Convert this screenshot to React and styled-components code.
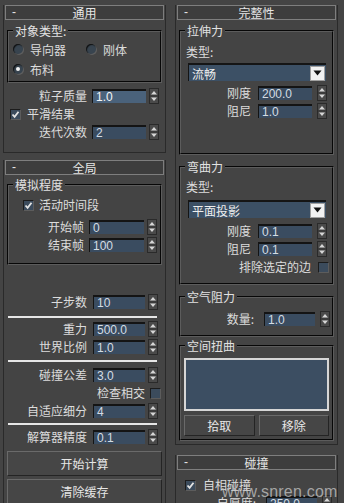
import React from "react";
import styled, { createGlobalStyle } from "styled-components";

const GlobalStyle = createGlobalStyle`
  html, body {
    margin: 0;
    padding: 0;
    background: #444444;
  }
  body {
    width: 344px;
    height: 503px;
    overflow: hidden;
    font-family: "Noto Sans CJK SC", "Noto Sans", sans-serif;
    font-size: 12px;
    color: #dcdcdc;
  }
`;

const Page = styled.div`
  position: relative;
  display: flex;
  align-items: flex-start;
  width: 344px;
  height: 503px;
  overflow: hidden;
  background: #444444;
`;

const Column = styled.div`
  width: 163px;
  margin-left: ${(p) => p.$ml}px;
  padding-top: 5px;
  display: flex;
  flex-direction: column;
`;

const Rollout = styled.section`
  margin-top: ${(p) => p.$mt || 0}px;
  padding-bottom: ${(p) => p.$pb || 0}px;
  border: 1px solid #2a2a2a;
  border-top: none;
`;

const Header = styled.div`
  height: 15px;
  margin: 0 1px;
  box-sizing: border-box;
  border: 1px solid #7e7e7e;
  background: #3d3d3d;
  display: grid;
  grid-template-columns: 18px 1fr 18px;
  align-items: center;
  line-height: 13px;
  color: #e6e6e6;
`;

const Minus = styled.span`
  padding-left: 6px;
  font-family: "Liberation Sans", Arial, sans-serif;
`;

const Title = styled.span`
  text-align: center;
`;

const Body = styled.div`
  padding: 0 3px;
`;

const Group = styled.fieldset`
  margin: ${(p) => p.$mt || 0}px 0 0;
  padding: ${(p) => p.$pt || 0}px 0 ${(p) => p.$pb || 0}px;
  border: 2px groove #5c5c5c;
  min-width: 0;
`;

const Legend = styled.legend`
  padding: 0 2px;
  margin-left: 4px;
  line-height: 14px;
  color: #e2e2e2;
`;

const RadioGrid = styled.div`
  display: grid;
  grid-template-columns: 73px auto;
  grid-auto-rows: 20px;
  padding-left: 4px;
`;

const RadioItem = styled.label`
  display: flex;
  align-items: center;
  gap: 7px;
`;

const RadioDot = styled.span`
  position: relative;
  width: 10px;
  height: 10px;
  border-radius: 50%;
  background: #38444f;
  box-shadow: inset 1px 1px 1px #101010, 1px 1px 0 #5e5e5e;

  &::after {
    content: "";
    display: ${(p) => (p.$on ? "block" : "none")};
    position: absolute;
    left: 3px;
    top: 3px;
    width: 4px;
    height: 4px;
    border-radius: 50%;
    background: #f2f2f2;
  }
`;

const Row = styled.div`
  display: flex;
  align-items: center;
  justify-content: ${(p) => (p.$left ? "flex-start" : "flex-end")};
  height: 18px;
  margin-top: ${(p) => p.$mt || 0}px;
  padding-right: ${(p) => p.$pr || 0}px;
  padding-left: ${(p) => p.$pl || 0}px;
`;

const Label = styled.span`
  white-space: nowrap;
  line-height: 14px;
  margin-right: ${(p) => p.$gap ?? 5}px;
  margin-left: ${(p) => p.$gapl || 0}px;
`;

const Field = styled.div`
  width: ${(p) => p.$w}px;
  height: 14px;
  box-sizing: border-box;
  padding-left: 3px;
  background: ${(p) => (p.$active ? "#4a627b" : "#3a4c60")};
  border-top: 2px solid #141414;
  border-left: 1px solid #141414;
  display: flex;
  align-items: center;
  font-family: "Liberation Sans", Arial, sans-serif;
  font-size: 12px;
  line-height: 12px;
  color: ${(p) => (p.$active ? "#f4f6f8" : "#d4dce4")};
`;

const SpinBox = styled.span`
  width: 10px;
  height: 16px;
  margin-left: ${(p) => p.$gap ?? 3}px;
  box-sizing: border-box;
  background: #4a4a4a;
  border: 1px solid #2a2a2a;
  display: flex;
  align-items: center;
  justify-content: center;
`;

const Box = styled.span`
  width: 11px;
  height: 11px;
  box-sizing: border-box;
  background: #3b4b5c;
  border-top: 1px solid #1c1c1c;
  border-left: 1px solid #1c1c1c;
  border-right: 1px solid #5c5c5c;
  border-bottom: 1px solid #5c5c5c;
  display: flex;
  align-items: center;
  justify-content: center;
`;

const Separator = styled.div`
  height: 2px;
  margin: ${(p) => p.$mt}px 5px 0 1px;
  background: #e6e6e6;
`;

const Button = styled.div`
  height: ${(p) => p.$h}px;
  margin-top: ${(p) => p.$mt || 0}px;
  box-sizing: border-box;
  background: #464646;
  border: 1px solid;
  border-color: #6a6a6a #242424 #242424 #6a6a6a;
  display: flex;
  align-items: center;
  justify-content: center;
  color: #e6e6e6;
`;

const TypeLabel = styled.div`
  height: 16px;
  margin-top: ${(p) => p.$mt}px;
  padding-left: 5px;
  line-height: 16px;
`;

const Select = styled.div`
  height: 18px;
  margin: ${(p) => p.$mt}px 6px 0 7px;
  box-sizing: border-box;
  padding-left: 3px;
  background: #3c5065;
  border-top: 2px solid #151515;
  border-left: 1px solid #151515;
  display: flex;
  align-items: center;
  justify-content: space-between;
  color: #eeeeee;
`;

const SelectArrow = styled.span`
  width: 15px;
  height: 15px;
  margin-right: 1px;
  box-sizing: border-box;
  background: #f2f2f2;
  border: 1px solid #a0a0a0;
  display: flex;
  align-items: center;
  justify-content: center;
`;

const ListBox = styled.div`
  height: 53px;
  margin: 5px 3px 0;
  box-sizing: border-box;
  background: #3c4e62;
  border: 2px solid #d6d6d6;
`;

const ButtonPair = styled.div`
  display: grid;
  grid-template-columns: 1fr 1fr;
  gap: 4px;
  margin: 4px 3px 0;
`;

const Watermark = styled.div`
  position: absolute;
  left: 222px;
  top: 483px;
  font-family: "Liberation Sans", Arial, sans-serif;
  font-size: 16px;
  letter-spacing: 0.2px;
  color: rgba(205, 205, 205, 0.72);
  pointer-events: none;
`;

const Spinner = ({ gap }) => (
  <SpinBox $gap={gap}>
    <svg width="8" height="14" viewBox="0 0 8 14">
      <path d="M1 5.5 L4 2 L7 5.5Z" fill="#d6d6d6" />
      <path d="M0 7h8" stroke="#2c2c2c" strokeWidth="1" />
      <path d="M1 8.5 L4 12 L7 8.5Z" fill="#d6d6d6" />
    </svg>
  </SpinBox>
);

const Check = ({ on }) => (
  <Box>
    {on && (
      <svg width="9" height="9" viewBox="0 0 9 9">
        <path d="M1.5 4.5 L3.6 6.8 L7.5 1.8" fill="none" stroke="#e4e4e4" strokeWidth="1.8" />
      </svg>
    )}
  </Box>
);

const Arrow = () => (
  <svg width="9" height="6" viewBox="0 0 9 6">
    <path d="M0.5 0.5 H8.5 L4.5 5.5Z" fill="#111" />
  </svg>
);

const SpinRow = ({ label, value, w, pr, gap, sgap, mt, active }) => (
  <Row $pr={pr} $mt={mt}>
    <Label $gap={gap}>{label}</Label>
    <Field $w={w} $active={active}>{value}</Field>
    <Spinner gap={sgap} />
  </Row>
);

const RollHeader = ({ title }) => (
  <Header>
    <Minus>-</Minus>
    <Title>{title}</Title>
    <span />
  </Header>
);

export default function App() {
  return (
    <Page>
      <GlobalStyle />

      <Column $ml={3}>
        <Rollout $pb={11}>
          <RollHeader title="通用" />
          <Body>
            <Group $mt={4} $pt={1} $pb={2}>
              <Legend>对象类型:</Legend>
              <RadioGrid>
                <RadioItem>
                  <RadioDot />
                  导向器
                </RadioItem>
                <RadioItem>
                  <RadioDot />
                  刚体
                </RadioItem>
                <RadioItem>
                  <RadioDot $on />
                  布料
                </RadioItem>
              </RadioGrid>
            </Group>
            <SpinRow label="粒子质量" value="1.0" w={54} pr={3} mt={4} active />
            <Row $left $pl={3}>
              <Check on />
              <Label $gapl={6}>平滑结果</Label>
            </Row>
            <SpinRow label="迭代次数" value="2" w={54} pr={3} />
          </Body>
        </Rollout>

        <Rollout $mt={7}>
          <RollHeader title="全局" />
          <Body>
            <Group $mt={3} $pt={4} $pb={9}>
              <Legend>模拟程度</Legend>
              <Row $left $pl={14}>
                <Check on />
                <Label $gapl={5}>活动时间段</Label>
              </Row>
              <SpinRow label="开始帧" value="0" w={55} pr={3} mt={4} />
              <SpinRow label="结束帧" value="100" w={55} pr={3} />
            </Group>
            <SpinRow label="子步数" value="10" w={52} pr={4} gap={6} mt={28} />
            <Separator $mt={5} />
            <SpinRow label="重力" value="500.0" w={52} pr={4} gap={6} mt={2} />
            <SpinRow label="世界比例" value="1.0" w={52} pr={4} gap={6} />
            <Separator $mt={4} />
            <SpinRow label="碰撞公差" value="3.0" w={52} pr={4} gap={6} mt={4} />
            <Row $pr={1}>
              <Label $gap={5}>检查相交</Label>
              <Check />
            </Row>
            <SpinRow label="自适应细分" value="4" w={52} pr={4} gap={6} />
            <Separator $mt={3} />
            <SpinRow label="解算器精度" value="0.1" w={52} pr={4} gap={6} mt={3} />
            <Button $h={25} $mt={5}>开始计算</Button>
            <Button $h={25} $mt={3}>清除缓存</Button>
          </Body>
        </Rollout>
      </Column>

      <Column $ml={9}>
        <Rollout $pb={3}>
          <RollHeader title="完整性" />
          <Body>
            <Group $mt={4} $pb={33}>
              <Legend>拉伸力</Legend>
              <TypeLabel $mt={6}>类型:</TypeLabel>
              <Select $mt={3}>
                流畅
                <SelectArrow>
                  <Arrow />
                </SelectArrow>
              </Select>
              <SpinRow label="刚度" value="200.0" w={54} pr={5} gap={7} sgap={5} mt={3} />
              <SpinRow label="阻尼" value="1.0" w={54} pr={5} gap={7} sgap={5} />
            </Group>

            <Group $mt={5} $pb={7}>
              <Legend>弯曲力</Legend>
              <TypeLabel $mt={5}>类型:</TypeLabel>
              <Select $mt={5}>
                平面投影
                <SelectArrow>
                  <Arrow />
                </SelectArrow>
              </Select>
              <SpinRow label="刚度" value="0.1" w={54} pr={5} gap={7} sgap={5} mt={4} />
              <SpinRow label="阻尼" value="0.1" w={54} pr={5} gap={7} sgap={5} />
              <Row $pr={3}>
                <Label $gap={7}>排除选定的边</Label>
                <Check />
              </Row>
            </Group>

            <Group $mt={5} $pb={7}>
              <Legend>空气阻力</Legend>
              <SpinRow label="数量:" value="1.0" w={51} pr={2} gap={10} sgap={5} mt={6} />
            </Group>

            <Group $mt={2} $pb={3}>
              <Legend>空间扭曲</Legend>
              <ListBox />
              <ButtonPair>
                <Button $h={21}>拾取</Button>
                <Button $h={21}>移除</Button>
              </ButtonPair>
            </Group>
          </Body>
        </Rollout>

        <Rollout $mt={10}>
          <RollHeader title="碰撞" />
          <Body>
            <Row $left $pl={6} $mt={6}>
              <Check on />
              <Label $gapl={7}>自相碰撞</Label>
            </Row>
            <SpinRow label="自厚度:" value="250.0" w={51} pr={2} gap={10} sgap={5} />
          </Body>
        </Rollout>
      </Column>

      <Watermark>www.snren.com</Watermark>
    </Page>
  );
}
